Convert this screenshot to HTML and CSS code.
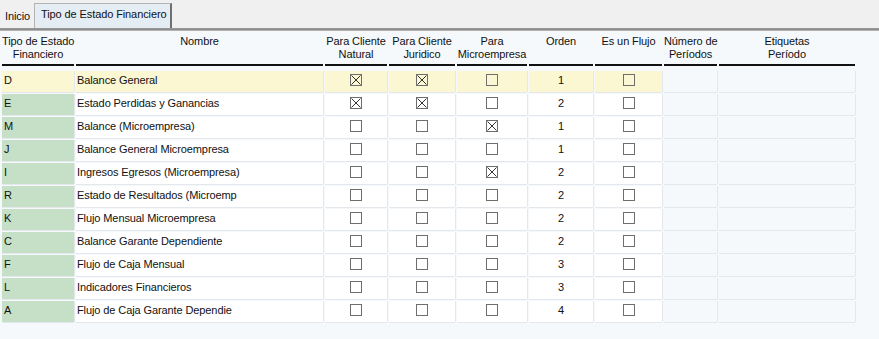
FILE: index.html
```html
<!DOCTYPE html>
<html>
<head>
    <title>Tipo de Estado Financiero</title>
    <meta charset="UTF-8">
    <link rel="stylesheet" href="styles.css">
</head>
<body>
    <div class="tabs">
        <div class="tab">Inicio</div>
        <div class="tab active">Tipo de Estado Financiero</div>
    </div>
    <div class="tab-bar"></div>

    <table class="grid">
        <colgroup>
            <col style="width: 72px">
            <col style="width: 247px">
            <col style="width: 62px">
            <col style="width: 66px">
            <col style="width: 70px">
            <col style="width: 64px">
            <col style="width: 67px">
            <col style="width: 53px">
            <col style="width: 136px">
        </colgroup>
        <thead>
            <tr>
                <th><div>Tipo de Estado<br>Financiero</div></th>
                <th><div>Nombre</div></th>
                <th><div>Para Cliente<br>Natural</div></th>
                <th><div>Para Cliente<br>Juridico</div></th>
                <th><div>Para<br>Microempresa</div></th>
                <th><div>Orden</div></th>
                <th><div>Es un Flujo</div></th>
                <th><div>Número de<br>Períodos</div></th>
                <th><div>Etiquetas<br>Período</div></th>
            </tr>
        </thead>
        <tbody id="rows"></tbody>
    </table>

    <script>
        const rows = [
            ['D', 'Balance General', 1, 1, 0, 1],
            ['E', 'Estado Perdidas y Ganancias', 1, 1, 0, 2],
            ['M', 'Balance (Microempresa)', 0, 0, 1, 1],
            ['J', 'Balance General Microempresa', 0, 0, 0, 1],
            ['I', 'Ingresos Egresos (Microempresa)', 0, 0, 1, 2],
            ['R', 'Estado de Resultados (Microemp', 0, 0, 0, 2],
            ['K', 'Flujo Mensual Microempresa', 0, 0, 0, 2],
            ['C', 'Balance Garante Dependiente', 0, 0, 0, 2],
            ['F', 'Flujo de Caja Mensual', 0, 0, 0, 3],
            ['L', 'Indicadores Financieros', 0, 0, 0, 3],
            ['A', 'Flujo de Caja Garante Dependie', 0, 0, 0, 4]
        ];

        function checkbox(on) {
            const mark = on ? '<path d="M1.5 1.5 L10.5 10.5 M10.5 1.5 L1.5 10.5" stroke="#333" stroke-width="1"/>' : '';
            return `<svg class="chk" width="12" height="12" viewBox="0 0 12 12">
                <rect x="0.5" y="0.5" width="11" height="11" fill="none" stroke="#6e6e6e"/>${mark}</svg>`;
        }

        const tbody = document.getElementById('rows');
        rows.forEach((r, i) => {
            const tr = document.createElement('tr');
            if (i === 0) tr.className = 'selected';
            tr.innerHTML = `
                <td class="code">${r[0]}</td>
                <td class="name">${r[1]}</td>
                <td class="center">${checkbox(r[2])}</td>
                <td class="center">${checkbox(r[3])}</td>
                <td class="center">${checkbox(r[4])}</td>
                <td class="center">${r[5]}</td>
                <td class="center">${checkbox(0)}</td>
                <td class="empty"></td>
                <td class="empty"></td>
            `;
            tbody.appendChild(tr);
        });
    </script>
</body>
</html>
```

FILE: styles.css
```css
* {
    box-sizing: border-box;
    margin: 0;
    padding: 0;
}

body {
    font-family: Tahoma, "Liberation Sans", Arial, sans-serif;
    font-size: 11px;
    letter-spacing: -0.1px;
    color: #111;
    background-color: #f5f9fc;
    width: 879px;
    height: 339px;
    overflow: hidden;
}

.tabs {
    display: flex;
    align-items: flex-end;
    height: 28px;
    background-color: #f0f0f0;
}

.tab {
    height: 25px;
    padding: 4px 5px 0 5px;
    line-height: 14px;
    white-space: nowrap;
}

.tab:first-child {
    width: 34px;
    padding-top: 6px;
}

.tab.active {
    width: 138px;
    padding: 3px 0 0 6px;
    background-color: #e4ecf4;
    border: 1px solid #b4b4b4;
    border-right: 2px solid #6f6f6f;
    border-bottom: none;
}

.tab-bar {
    height: 3px;
    background: linear-gradient(#9a9a9a, #8c8c8c, #c6c6c6);
}

.grid {
    table-layout: fixed;
    border-collapse: separate;
    border-spacing: 2px;
    width: 857px;
}

th {
    font-weight: normal;
    vertical-align: top;
    padding: 0 0 3px 0;
}

th div {
    height: 33px;
    padding-top: 2px;
    line-height: 13px;
    text-align: center;
    white-space: nowrap;
    border-bottom: 2px solid #111;
}

td {
    height: 21px;
    padding: 3px 2px 0 2px;
    line-height: 13px;
    vertical-align: top;
    white-space: nowrap;
    overflow: hidden;
    background-color: #fff;
    box-shadow: 1px 0 0 #e4e8ec, 0 1px 0 #e4e8ec;
}

td.code {
    background-color: #c5e0c6;
}

td.name {
    padding-left: 1px;
}

td.center {
    text-align: center;
}

td.empty {
    background-color: #f5f9fc;
}

tr.selected td {
    background-color: #faf7d2;
}

tr.selected td.empty {
    background-color: #f5f9fc;
}

.chk {
    display: block;
    margin: 0 auto;
}
```
